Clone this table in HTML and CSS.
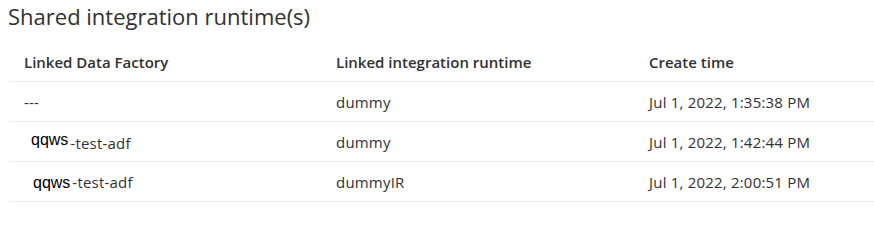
FILE: index.html
```html
<!DOCTYPE html>
<html>
<head>
<meta charset="utf-8">
<link rel="stylesheet" href="styles.css">
</head>
<body>
<div class="page">
  <h1 class="title">Shared integration runtime(s)</h1>
  <table class="grid">
    <colgroup>
      <col class="c1"><col class="c2"><col class="c3">
    </colgroup>
    <thead>
      <tr>
        <th>Linked Data Factory</th>
        <th>Linked integration runtime</th>
        <th>Create time</th>
      </tr>
    </thead>
    <tbody>
      <tr>
        <td>---</td>
        <td>dummy</td>
        <td>Jul 1, 2022, 1:35:38 PM</td>
      </tr>
      <tr>
        <td><span class="redact redact-raised">qqws</span>-test-adf</td>
        <td>dummy</td>
        <td>Jul 1, 2022, 1:42:44 PM</td>
      </tr>
      <tr>
        <td><span class="redact redact-flat">qqws</span>-test-adf</td>
        <td>dummyIR</td>
        <td>Jul 1, 2022, 2:00:51 PM</td>
      </tr>
    </tbody>
  </table>
</div>
</body>
</html>
```

FILE: styles.css
```css
html, body {
  margin: 0;
  padding: 0;
  background: #ffffff;
}

.page {
  padding: 0 0 0 9px;
  font-family: "Open Sans", "Noto Sans", sans-serif;
  color: #323130;
}

.title {
  margin: 0 0 0 -1px;
  height: 42px;
  font-size: 22px;
  line-height: 32px;
  font-weight: 400;
  color: #323130;
}

.grid {
  width: 865px;
  border-collapse: collapse;
  table-layout: fixed;
  font-size: 15px;
}

.c1 { width: 312px; }
.c2 { width: 313px; }

.grid th,
.grid td {
  height: 39px;
  padding: 0 0 0 15px;
  border-bottom: 1px solid #edebe9;
  text-align: left;
  vertical-align: middle;
  white-space: nowrap;
}

.grid th {
  font-weight: 600;
}

.grid td {
  font-weight: 400;
  letter-spacing: 0.2px;
}

.redact {
  font-family: "Liberation Sans", Arial, sans-serif;
  font-size: 16px;
  letter-spacing: 0;
  color: #000000;
  background: #ffffff;
  padding-right: 2px;
}

.redact-raised {
  padding-left: 7px;
  vertical-align: 4px;
}

.redact-flat {
  padding-left: 9px;
}
```
